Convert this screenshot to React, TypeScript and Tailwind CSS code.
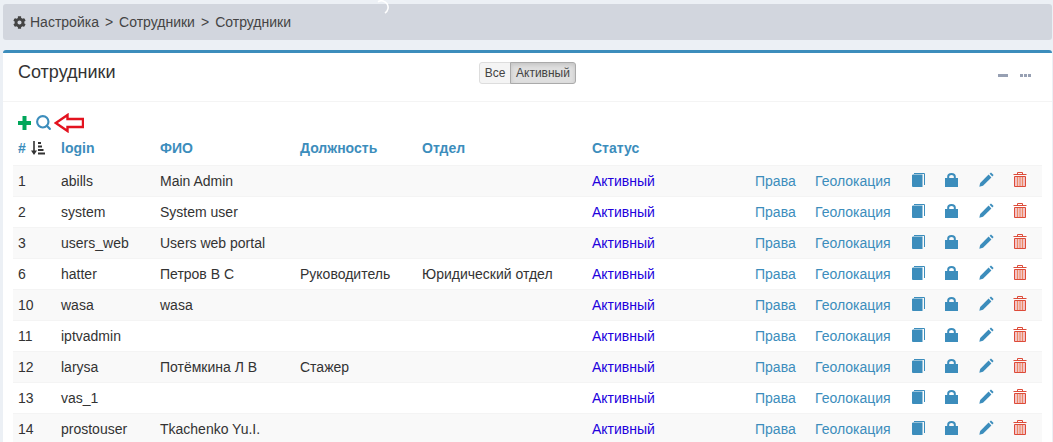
import { FaCog } from 'react-icons/fa';
import { Search } from 'lucide-react';

const ROWS = [
  { id: 1, login: 'abills', name: 'Main Admin', position: '', dept: '' },
  { id: 2, login: 'system', name: 'System user', position: '', dept: '' },
  { id: 3, login: 'users_web', name: 'Users web portal', position: '', dept: '' },
  { id: 6, login: 'hatter', name: 'Петров В С', position: 'Руководитель', dept: 'Юридический отдел' },
  { id: 10, login: 'wasa', name: 'wasa', position: '', dept: '' },
  { id: 11, login: 'iptvadmin', name: '', position: '', dept: '' },
  { id: 12, login: 'larysa', name: 'Потёмкина Л В', position: 'Стажер', dept: '' },
  { id: 13, login: 'vas_1', name: '', position: '', dept: '' },
  { id: 14, login: 'prostouser', name: 'Tkachenko Yu.I.', position: '', dept: '' },
];

function BookIcon() {
  return (
    <svg width="13" height="14" viewBox="0 0 13 14" className="block">
      <path d="M0 2 L1 1.5 H10.5 V14 H1 L0 13.5 Z" fill="#3c8dbc" />
      <path d="M2 0.5 H12.5 V12" fill="none" stroke="#3c8dbc" strokeWidth="1" />
    </svg>
  );
}

function LockIcon() {
  return (
    <svg width="13" height="14" viewBox="0 0 13 14" className="block">
      <path d="M3.2 6 V3.5 Q3.2 1 6.5 1 Q9.8 1 9.8 3.5 V6" fill="none" stroke="#3c8dbc" strokeWidth="2" />
      <rect x="0" y="5" width="13" height="9" fill="#3c8dbc" />
    </svg>
  );
}

function PencilIcon() {
  return (
    <svg width="15" height="15" viewBox="0 0 15 15" className="block">
      <path d="M0.3 14.7 L1.2 11 L9.6 2.6 L12.4 5.4 L4 13.8 Z" fill="#3c8dbc" />
      <path d="M10.6 1.7 L12 0.4 L14.6 3 L13.3 4.4 Z" fill="#3c8dbc" />
    </svg>
  );
}

function TrashIcon() {
  return (
    <svg width="14" height="15" viewBox="0 0 14 15" className="block">
      <path d="M0.5 2.5 H13.5" stroke="#dd4b39" strokeWidth="1" />
      <path d="M4.5 2 V0.5 H9.5 V2" fill="none" stroke="#dd4b39" strokeWidth="1" />
      <path d="M1.5 4.5 H12.5 V14.5 H1.5 Z" fill="#f3c3c8" stroke="#dd4b39" strokeWidth="1" />
      <path d="M4.5 5 V14 M7 5 V14 M9.5 5 V14" stroke="#ec8a5e" strokeWidth="1" />
    </svg>
  );
}

function PlusIcon() {
  return (
    <svg width="13" height="14" viewBox="0 0 13 14" className="block">
      <path d="M4.5 0 H8.5 V5 H13 V9 H8.5 V14 H4.5 V9 H0 V5 H4.5 Z" fill="#00a65a" />
    </svg>
  );
}

function SortIcon() {
  return (
    <svg width="14" height="14" viewBox="0 0 14 14" className="block">
      <path d="M2.2 0 H3.8 V9.5 H6 L3 14 L0 9.5 H2.2 Z" fill="#333" />
      <path d="M7 1 H10 V3 H7 Z M7 4.5 H11 V6.5 H7 Z M7 8 H12.5 V10 H7 Z M7 11.5 H14 V13.5 H7 Z" fill="#333" />
    </svg>
  );
}

function RedArrow() {
  return (
    <svg width="30" height="20" viewBox="0 0 30 20" className="block">
      <path d="M1.8 10 L13.5 2 V6 H29 V14 H13.5 V18 Z" fill="#fff" stroke="#e3131f" strokeWidth="2.4" />
    </svg>
  );
}

function Th({ children }: { children?: React.ReactNode }) {
  return <th className="px-[5px] pt-[4px] pb-[6px] text-left font-bold text-[#3c8dbc]">{children}</th>;
}

export default function App() {
  return (
    <div className="relative h-[442px] w-[1053px] overflow-hidden bg-[#ecf0f5] pt-[4px] pl-[3px] text-[14px] text-[#333] [font-family:'Liberation_Sans',Arial,sans-serif]">
      <svg width="16" height="16" viewBox="0 0 16 16" className="absolute top-0 left-[373px]">
        <path d="M5 1.8 A6.5 6.5 0 0 1 12 13" fill="none" stroke="#fff" strokeWidth="1.6" />
      </svg>

      <div className="flex h-[36px] w-[1049px] items-center gap-[6px] rounded-[3px] bg-[#d2d6de] pl-[10px] text-[#444]">
        <FaCog className="mr-[-2px] text-[13px]" />
        <span>Настройка</span>
        <span>&gt;</span>
        <span>Сотрудники</span>
        <span>&gt;</span>
        <span>Сотрудники</span>
      </div>

      <div className="mt-[10px] h-[400px] w-[1049px] rounded-[3px] border-t-[3px] border-[#3c8dbc] bg-white">
        <div className="relative flex h-[49px] border-b border-[#f4f4f4] pl-[15px] pt-[9px]">
          <h3 className="text-[18px] leading-[20px] text-[#333]">Сотрудники</h3>
          <div className="absolute top-[9px] left-[476px] flex h-[22px] text-[12px] leading-[20px] text-[#444]">
            <span className="w-[32px] rounded-l-[3px] border border-[#ddd] bg-[#f4f4f4] text-center">Все</span>
            <span className="-ml-px w-[66px] rounded-r-[3px] border border-[#aaa] bg-[#dfdfdf] text-center shadow-[inset_0_2px_4px_rgba(0,0,0,0.12)]">Активный</span>
          </div>
          <div className="absolute top-[21px] right-[21px] flex items-center gap-[12px]">
            <span className="h-[3px] w-[10px] bg-[#97a0b3]" />
            <span className="flex gap-[1px]">
              <span className="h-[3px] w-[3px] bg-[#97a0b3]" />
              <span className="h-[3px] w-[3px] bg-[#97a0b3]" />
              <span className="h-[3px] w-[3px] bg-[#97a0b3]" />
            </span>
          </div>
        </div>

        <div className="px-[10px]">
          <div className="mt-[12px] flex h-[17px] items-center pl-[5px]">
            <PlusIcon />
            <Search size={17} strokeWidth={3} className="ml-[4px] text-[#3c8dbc]" />
            <span className="ml-[2px]"><RedArrow /></span>
          </div>

          <table className="mt-[3px] w-[1029px] table-fixed border-collapse">
            <colgroup>
              <col className="w-[43px]" />
              <col className="w-[99px]" />
              <col className="w-[140px]" />
              <col className="w-[122px]" />
              <col className="w-[170px]" />
              <col className="w-[163px]" />
              <col className="w-[60px]" />
              <col className="w-[95px]" />
              <col className="w-[33px]" />
              <col className="w-[34px]" />
              <col className="w-[35px]" />
              <col className="w-[35px]" />
            </colgroup>
            <thead>
              <tr className="h-[30px]">
                <Th>
                  <span className="flex items-center gap-[5px]">
                    # <span className="-mt-[2px]"><SortIcon /></span>
                  </span>
                </Th>
                <Th>login</Th>
                <Th>ФИО</Th>
                <Th>Должность</Th>
                <Th>Отдел</Th>
                <Th>Статус</Th>
                <Th />
                <Th />
                <Th />
                <Th />
                <Th />
                <Th />
              </tr>
            </thead>
            <tbody>
              {ROWS.map((row, i) => (
                <tr key={row.id} className={`h-[31px] border-t border-[#f4f4f4] ${i % 2 === 0 ? 'bg-[#f9f9f9]' : 'bg-white'}`}>
                  <td className="px-[5px]">{row.id}</td>
                  <td className="px-[5px]">{row.login}</td>
                  <td className="px-[5px]">{row.name}</td>
                  <td className="px-[5px]">{row.position}</td>
                  <td className="px-[5px] whitespace-nowrap">{row.dept}</td>
                  <td className="px-[5px] text-[#2200dd]">Активный</td>
                  <td className="px-[5px] text-[#3c8dbc]">Права</td>
                  <td className="px-[5px] text-[#3c8dbc]">Геолокация</td>
                  <td className="px-[7px] pb-[3px]"><BookIcon /></td>
                  <td className="px-[7px] pb-[3px]"><LockIcon /></td>
                  <td className="px-[7px] pb-[3px]"><PencilIcon /></td>
                  <td className="px-[6px] pb-[4px]"><TrashIcon /></td>
                </tr>
              ))}
            </tbody>
          </table>
        </div>
      </div>
    </div>
  );
}
